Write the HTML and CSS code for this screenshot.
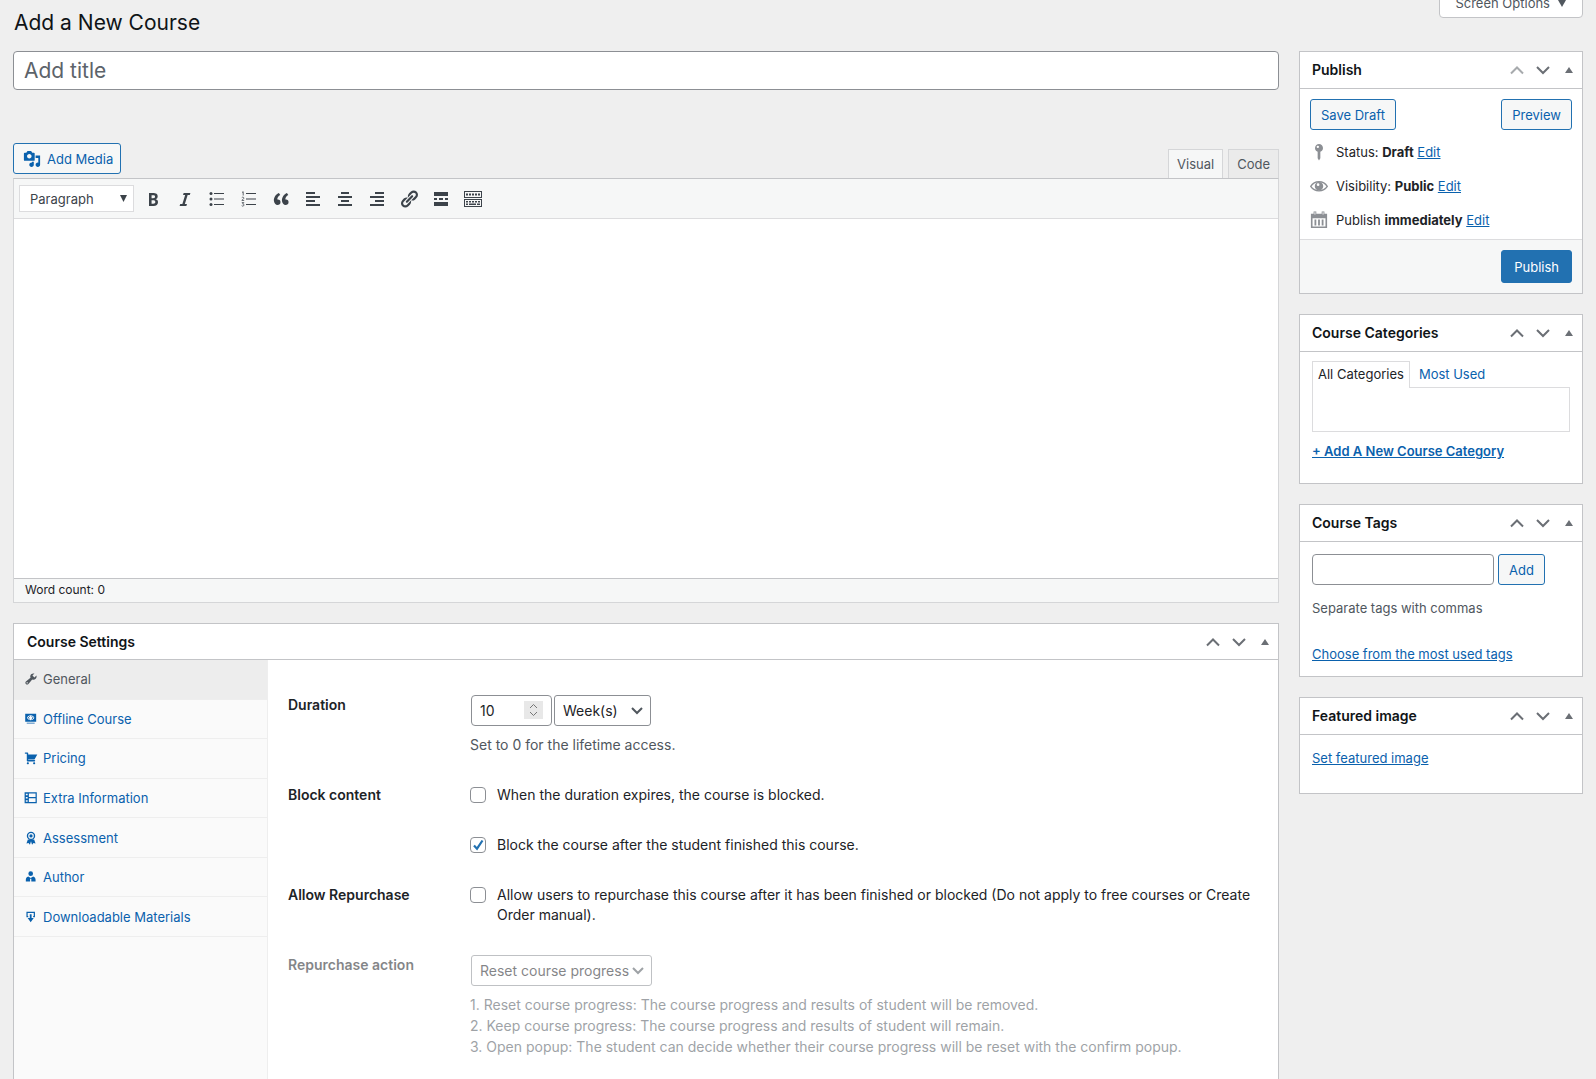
FILE: index.html
```html
<!DOCTYPE html>
<html lang="en">
<head>
<meta charset="utf-8">
<title>Add a New Course</title>
<link rel="stylesheet" href="styles.css">
</head>
<body>
<svg class="sprite" aria-hidden="true">
  <symbol id="i-up" viewBox="0 0 20 20"><path d="M4 13.500 10 7.500l6 6" fill="none" stroke="currentColor" stroke-width="2"/></symbol>
  <symbol id="i-down" viewBox="0 0 20 20"><path d="M4 7l6 6 6-6" fill="none" stroke="currentColor" stroke-width="2"/></symbol>
  <symbol id="i-toggle" viewBox="0 0 20 20"><path d="M6 13h8L10 7z"/></symbol>
</svg>
<div class="page">
  <header class="page-head">
    <h1>Add a New Course</h1>
    <button type="button" class="screen-options">Screen Options <svg class="caret" viewBox="0 0 8 7"><path d="M0 0h8L4 7z"/></svg></button>
  </header>
  <div class="columns">
    <main class="main">
      <input class="title-input" type="text" placeholder="Add title" aria-label="Add title">
      <div class="editor-tools">
        <button type="button" class="btn media-btn"><svg class="icon-18" viewBox="0 0 20 20"><path d="M13 11V4c0-.55-.45-1-1-1h-1.670L9 1H5L3.670 3H2c-.55 0-1 .45-1 1v7c0 .55.45 1 1 1h10c.55 0 1-.45 1-1zM7 4.500c1.380 0 2.500 1.120 2.500 2.500S8.380 9.500 7 9.500 4.500 8.380 4.500 7 5.620 4.500 7 4.500zM14 6h5v10.500c0 1.380-1.120 2.500-2.500 2.500S14 17.880 14 16.500s1.120-2.500 2.500-2.500c.17 0 .34.02.5.05V9h-3V6zm-4 8.050V13h2v3.500c0 1.380-1.120 2.500-2.500 2.500S7 17.880 7 16.500 8.120 14 9.500 14c.17 0 .34.02.5.050z"/></svg>Add Media</button>
        <div class="editor-tabs">
          <button type="button" class="editor-tab is-active">Visual</button>
          <button type="button" class="editor-tab">Code</button>
        </div>
      </div>
      <section class="editor">
        <div class="toolbar">
          <select class="format" aria-label="Format"><option>Paragraph</option></select>
          <button type="button" class="tool" aria-label="Bold"><svg viewBox="0 0 20 20"><path d="M6 4v13h4.540c1.370 0 2.460-.33 3.260-1 .8-.66 1.200-1.580 1.200-2.770 0-.84-.17-1.510-.51-2.010s-.9-.85-1.670-1.030v-.09c.57-.1 1.020-.4 1.360-.9s.51-1.130.51-1.910c0-1.140-.39-1.980-1.170-2.500C12.750 4.260 11.500 4 9.780 4H6zm2.570 5.150V6.260h1.360c.73 0 1.270.11 1.610.32.34.22.51.58.51 1.070 0 .54-.16.92-.47 1.150s-.82.35-1.500.35h-1.510zm0 2.190h1.600c1.440 0 2.160.53 2.160 1.610 0 .6-.17 1.050-.51 1.340s-.86.43-1.570.43H8.570v-3.380z"/></svg></button>
          <button type="button" class="tool" aria-label="Italic"><svg viewBox="0 0 20 20"><path d="M14.780 6h-2.130l-2.800 9h2.120l-.62 2H4.600l.62-2h2.140l2.800-9H8.030l.62-2h6.750z"/></svg></button>
          <button type="button" class="tool" aria-label="Bulleted list"><svg viewBox="0 0 20 20"><circle cx="4" cy="4.500" r="1.500"/><circle cx="4" cy="10" r="1.500"/><circle cx="4" cy="15.500" r="1.500"/><path d="M7 4h10v1H7zM7 9.500h10v1H7zM7 15h10v1H7z"/></svg></button>
          <button type="button" class="tool" aria-label="Numbered list"><svg viewBox="0 0 20 20"><path d="M7 4h10v1H7zM7 9.500h10v1H7zM7 15h10v1H7z"/><path d="M3 3.500l1.200-.8V6.500M2.800 8.600c.8-.8 2.200-.4 2 .6-.1.700-1.100 1.400-2 2.200h2.400M2.800 13.600h2l-1.200 1.300c1.800-.1 1.800 2.200.2 2.200-.5 0-.8-.1-1.100-.4" fill="none" stroke="currentColor" stroke-width=".8"/></svg></button>
          <button type="button" class="tool" aria-label="Blockquote"><svg viewBox="0 0 20 20"><path d="M9.490 13.220c0-.74-.2-1.380-.61-1.900-.62-.78-1.830-.88-2.530-.72-.29-1.650 1.110-3.750 2.920-4.650L7.880 4c-2.730 1.300-5.420 4.280-4.960 8.050C3.210 14.430 4.590 16 6.540 16c.85 0 1.560-.25 2.120-.75s.83-1.180.83-2.030zm8.050 0c0-.74-.2-1.380-.61-1.900-.63-.78-1.830-.88-2.530-.72-.29-1.650 1.110-3.750 2.920-4.650L15.930 4c-2.730 1.300-5.410 4.280-4.950 8.050.29 2.380 1.660 3.950 3.610 3.950.85 0 1.560-.25 2.120-.75s.83-1.180.83-2.030z"/></svg></button>
          <button type="button" class="tool" aria-label="Align left"><svg viewBox="0 0 20 20"><path d="M12 5V3H3v2h9zm5 4V7H3v2h14zm-5 4v-2H3v2h9zm5 4v-2H3v2h14z"/></svg></button>
          <button type="button" class="tool" aria-label="Align center"><svg viewBox="0 0 20 20"><path d="M14 5V3H6v2h8zm3 4V7H3v2h14zm-3 4v-2H6v2h8zm3 4v-2H3v2h14z"/></svg></button>
          <button type="button" class="tool" aria-label="Align right"><svg viewBox="0 0 20 20"><path d="M17 5V3H8v2h9zm0 4V7H3v2h14zm0 4v-2H8v2h9zm0 4v-2H3v2h14z"/></svg></button>
          <button type="button" class="tool" aria-label="Insert link"><svg viewBox="0 0 20 20"><path d="M17.740 2.760c1.680 1.690 1.680 4.410 0 6.100l-1.530 1.520c-1.120 1.120-2.700 1.470-4.140 1.090l2.620-2.610.76-.77.76-.76c.84-.84.84-2.200 0-3.040-.84-.85-2.200-.85-3.040 0l-.77.76-3.380 3.380c-.37-1.440-.02-3.020 1.100-4.140l1.520-1.530c1.690-1.680 4.420-1.680 6.100 0zM8.590 13.430l5.340-5.340c.42-.42.42-1.100 0-1.520-.44-.43-1.130-.39-1.530 0l-5.330 5.340c-.42.42-.42 1.100 0 1.520.44.43 1.130.39 1.520 0zm-.76 2.290l4.140-4.150c.38 1.440.03 3.020-1.090 4.140l-1.520 1.530c-1.690 1.680-4.410 1.680-6.100 0-1.680-1.680-1.680-4.420 0-6.100l1.530-1.520c1.120-1.120 2.700-1.470 4.140-1.100l-4.140 4.150c-.85.84-.85 2.200 0 3.050.84.84 2.200.84 3.040 0z"/></svg></button>
          <button type="button" class="tool" aria-label="Insert Read More tag"><svg viewBox="0 0 20 20"><path d="M17 7V3H3v4h14zM6 11V9H3v2h3zm6 0V9H8v2h4zm5 0V9h-3v2h3zm0 6v-4H3v4h14z"/></svg></button>
          <button type="button" class="tool" aria-label="Toolbar toggle"><svg viewBox="0 0 20 20"><path fill-rule="evenodd" d="M1 2h18v7H1zM2 3v5h16V3zM1 10h18v8H1zM2 11v6h16v-6z"/><path d="M3 4.500h2v2H3zM6 4.500h2v2H6zM9 4.500h2v2H9zM12 4.500h2v2h-2zM15 4.500h2v2h-2zM3 12h2v1.500H3zM6 12h2v1.500H6zM9 12h2v1.500H9zM12 12h2v1.500h-2zM15 12h2v1.500h-2zM3 14.500h2V16H3zM6 14.500h7V16H6zM14 14.500h3V16h-3z"/></svg></button>
        </div>
        <textarea class="editor-body" aria-label="Course content"></textarea>
        <div class="statusbar">Word count: 0</div>
      </section>
      <section class="box settings">
        <div class="box-head">
          <h2>Course Settings</h2>
          <div class="handles">
            <button type="button" aria-label="Move up"><svg><use href="#i-up"/></svg></button>
            <button type="button" aria-label="Move down"><svg><use href="#i-down"/></svg></button>
            <button type="button" aria-label="Toggle panel"><svg><use href="#i-toggle"/></svg></button>
          </div>
        </div>
        <div class="settings-body">
          <nav class="settings-nav">
            <div class="nav-list">
              <a href="#general" class="is-active"><svg viewBox="0 0 20 20"><path d="M16.680 9.770c-1.340 1.340-3.300 1.670-4.950.99l-5.410 6.520c-.99.99-2.590.99-3.580 0s-.99-2.590 0-3.570l6.520-5.420c-.68-1.650-.35-3.610.99-4.950 1.280-1.280 3.120-1.620 4.720-1.060l-2.890 2.890 2.820 2.820 2.860-2.870c.53 1.580.18 3.390-1.080 4.650zM3.810 16.210c.4.39 1.040.39 1.430 0 .4-.4.4-1.040 0-1.430-.39-.4-1.030-.4-1.430 0-.39.39-.39 1.030 0 1.430z"/></svg>General</a>
              <a href="#offline"><svg viewBox="-1 -1 23 23"><path fill-rule="evenodd" d="M1 2h18v13H1zM10 4.500C7 4.500 5 6.500 4 8.500c1 2 3 4 6 4s5-2 6-4c-1-2-3-4-6-4zM3.500 16.500h13V18h-13z"/><path d="M8.500 6 6 8.500 8.500 11M11.500 6 14 8.500 11.500 11" fill="none" stroke="currentColor" stroke-width="1.500"/></svg>Offline Course</a>
              <a href="#pricing"><svg viewBox="0 0 20 20"><path d="M6 13h9c.55 0 1 .45 1 1s-.45 1-1 1H5c-.55 0-1-.45-1-1V4H2c-.55 0-1-.45-1-1s.45-1 1-1h3c.55 0 1 .45 1 1v2h13l-4 7H6v1zm-.5 3c.83 0 1.500.67 1.500 1.500S6.330 19 5.500 19 4 18.330 4 17.500 4.670 16 5.500 16zm9 0c.83 0 1.500.67 1.500 1.500s-.67 1.500-1.500 1.500-1.500-.67-1.500-1.500.67-1.500 1.500-1.500z"/></svg>Pricing</a>
              <a href="#extra"><svg viewBox="-1 -1 23 23"><path fill-rule="evenodd" d="M0 1h20v18H0zM7 3v6h11V3zM7 11v6h11v-6zM2 3.500V6h3V3.500zM2 8.800v2.400h3V8.800zM2 14v2.500h3V14z"/></svg>Extra Information</a>
              <a href="#assessment"><svg viewBox="0 0 20 20"><path d="M5.500 12 3.500 18l3-.8L8.500 19.500l1.500-5 1.500 5 2-2.300 3 .8-2-6z"/><circle cx="10" cy="7" r="5" fill="none" stroke="currentColor" stroke-width="2"/><circle cx="10" cy="7" r="2.300"/></svg>Assessment</a>
              <a href="#author"><svg viewBox="-1 -1 23 23"><circle cx="10" cy="5" r="3.800"/><path d="M6 9.500 10 12l4-2.500c2.800.8 4 3 4 5.500v3h-7v-4.500H9V18H2v-3c0-2.500 1.200-4.700 4-5.500z"/></svg>Author</a>
              <a href="#materials"><svg viewBox="-1 -1 23 23"><path d="M3 2h14v9h-3V9h1V4H5v5h1v2H3zM8.500 6h3v6H15l-5 7-5-7h3.500z"/></svg>Downloadable Materials</a>
            </div>
          </nav>
          <form class="fields">
            <div class="field">
              <label class="field-label" for="duration">Duration</label>
              <div class="field-control">
                <div class="inline">
                  <span class="number"><input id="duration" type="number" value="10"><svg class="spinner" viewBox="0 0 19 18"><path d="M6 7l3.500-3.500L13 7M6 11l3.500 3.500L13 11" fill="none" stroke="currentColor"/></svg></span>
                  <select class="select unit" aria-label="Duration unit"><option>Week(s)</option></select>
                </div>
                <p class="hint">Set to 0 for the lifetime access.</p>
              </div>
            </div>
            <div class="field">
              <span class="field-label">Block content</span>
              <div class="field-control checks">
                <label class="check"><input type="checkbox">When the duration expires, the course is blocked.</label>
                <label class="check"><input type="checkbox" checked>Block the course after the student finished this course.</label>
              </div>
            </div>
            <div class="field">
              <span class="field-label">Allow Repurchase</span>
              <div class="field-control">
                <label class="check"><input type="checkbox"><span>Allow users to repurchase this course after it has been finished or blocked (Do not apply to free courses or Create Order manual).</span></label>
              </div>
            </div>
            <div class="field is-muted">
              <label class="field-label" for="action">Repurchase action</label>
              <div class="field-control">
                <div class="inline"><select class="select action" id="action"><option>Reset course progress</option></select></div>
                <p class="hint">1. Reset course progress: The course progress and results of student will be removed.<br>2. Keep course progress: The course progress and results of student will remain.<br>3. Open popup: The student can decide whether their course progress will be reset with the confirm popup.</p>
              </div>
            </div>
          </form>
        </div>
      </section>
    </main>
    <aside class="side">
      <section class="box">
        <div class="box-head">
          <h2>Publish</h2>
          <div class="handles">
            <button type="button" class="is-first" aria-label="Move up"><svg><use href="#i-up"/></svg></button>
            <button type="button" aria-label="Move down"><svg><use href="#i-down"/></svg></button>
            <button type="button" aria-label="Toggle panel"><svg><use href="#i-toggle"/></svg></button>
          </div>
        </div>
        <div class="publish-actions">
          <button type="button" class="btn">Save Draft</button>
          <button type="button" class="btn">Preview</button>
        </div>
        <ul class="publish-info">
          <li><svg viewBox="0 0 20 20"><path fill-rule="evenodd" d="M10 1a4.500 4.500 0 0 1 1.500 8.700V17L10 19.500 8.500 17V9.700A4.500 4.500 0 0 1 10 1zM8.700 3a1.300 1.300 0 1 0 0 2.600 1.300 1.300 0 0 0 0-2.600z"/></svg><span>Status: <b>Draft</b> <a href="#status">Edit</a></span></li>
          <li><svg viewBox="0 0 20 20"><path d="M.8 10.500C5 3.500 15 3.500 19.200 10.500 15 17 5 17 .8 10.500z" fill="none" stroke="currentColor" stroke-width="1.500"/><path fill-rule="evenodd" d="M10 5.500a4.700 4.700 0 1 1 0 9.400 4.700 4.700 0 0 1 0-9.400zM9 7a1.500 1.500 0 1 0 0 3 1.500 1.500 0 0 0 0-3z"/></svg><span>Visibility: <b>Public</b> <a href="#visibility">Edit</a></span></li>
          <li><svg viewBox="0 0 20 20"><path fill-rule="evenodd" d="M1 3h18v16H1zM2.800 8v9.300h14.400V8z"/><path d="M4 .5h3V5H4zM13 .5h3V5h-3zM5 9.500h2v6.500H5zM9 9.500h2v6.500H9zM13 9.500h2v6.500h-2z"/><path d="M5 1.500h1V4H5zM14 1.500h1V4h-1z" fill="#fff"/></svg><span>Publish <b>immediately</b> <a href="#schedule">Edit</a></span></li>
        </ul>
        <div class="publish-foot"><button type="button" class="btn btn-primary">Publish</button></div>
      </section>
      <section class="box">
        <div class="box-head">
          <h2>Course Categories</h2>
          <div class="handles">
            <button type="button" aria-label="Move up"><svg><use href="#i-up"/></svg></button>
            <button type="button" aria-label="Move down"><svg><use href="#i-down"/></svg></button>
            <button type="button" aria-label="Toggle panel"><svg><use href="#i-toggle"/></svg></button>
          </div>
        </div>
        <div class="categories">
          <div class="cat-tabs"><a href="#all" class="is-active">All Categories</a><a href="#used">Most Used</a></div>
          <div class="cat-panel"></div>
          <a href="#new-category" class="add-link">+ Add A New Course Category</a>
        </div>
      </section>
      <section class="box">
        <div class="box-head">
          <h2>Course Tags</h2>
          <div class="handles">
            <button type="button" aria-label="Move up"><svg><use href="#i-up"/></svg></button>
            <button type="button" aria-label="Move down"><svg><use href="#i-down"/></svg></button>
            <button type="button" aria-label="Toggle panel"><svg><use href="#i-toggle"/></svg></button>
          </div>
        </div>
        <div class="tags">
          <div class="tag-row"><input type="text" aria-label="Add tag"><button type="button" class="btn">Add</button></div>
          <p>Separate tags with commas</p>
          <a href="#tags">Choose from the most used tags</a>
        </div>
      </section>
      <section class="box">
        <div class="box-head">
          <h2>Featured image</h2>
          <div class="handles">
            <button type="button" aria-label="Move up"><svg><use href="#i-up"/></svg></button>
            <button type="button" aria-label="Move down"><svg><use href="#i-down"/></svg></button>
            <button type="button" aria-label="Toggle panel"><svg><use href="#i-toggle"/></svg></button>
          </div>
        </div>
        <div class="featured"><a href="#image">Set featured image</a></div>
      </section>
    </aside>
  </div>
</div>
</body>
</html>
```
FILE: styles.css
```css
* { box-sizing: border-box; }

body {
  margin: 0;
  background: #efefef;
  color: #1d2327;
  font: 13px/20px Inter, "Liberation Sans", sans-serif;
}

button, input, select, textarea { font: inherit; color: inherit; margin: 0; }
button { cursor: pointer; }
h1, h2, p, ul { margin: 0; padding: 0; }
h1, h2 { color: #101417; }
ul { list-style: none; }
a { color: #0a61ad; }
svg { fill: currentColor; flex: none; }
.sprite { display: none; }

.page {
  display: flex;
  flex-direction: column;
  min-height: 100vh;
  padding: 0 13px;
}

.page-head {
  display: flex;
  justify-content: space-between;
  align-items: flex-start;
  height: 51px;
}
.page-head h1 {
  padding: 7px 0 0 1px;
  font-size: 21px;
  line-height: 32px;
  font-weight: 400;
}
.screen-options {
  display: flex;
  align-items: center;
  gap: 8px;
  height: 30px;
  margin-top: -12px;
  padding: 0 16px 0 15px;
  background: #fff;
  border: 1px solid #c3c4c7;
  border-radius: 0 0 4px 4px;
  color: #50575e;
}
.caret { width: 8px; height: 7px; }

.columns { display: flex; flex: 1; gap: 20px; }
.main { display: flex; flex: 1; flex-direction: column; min-width: 0; }
.side { display: flex; flex: none; flex-direction: column; gap: 20px; width: 284px; }

.title-input {
  width: 100%;
  height: 39px;
  padding: 0 10px;
  border: 1px solid #8c8f94;
  border-radius: 4px;
  background: #fff;
  font-size: 21px;
}
.title-input::placeholder { color: #5c636a; opacity: 1; }

.btn {
  height: 31px;
  padding: 0 10px;
  border: 1px solid #2271b1;
  border-radius: 3px;
  background: #f6f7f7;
  color: #0a61ad;
}
.btn-primary { height: 33px; padding: 0 12px; background: #2271b1; color: #fff; }

.editor-tools { display: flex; justify-content: space-between; margin-top: 53px; height: 35px; }
.media-btn { display: flex; align-items: center; gap: 6px; padding: 0 7px 0 9px; }
.icon-18 { width: 18px; height: 18px; }
.editor-tabs { display: flex; align-items: flex-end; gap: 5px; margin-bottom: -1px; }
.editor-tab {
  height: 30px;
  padding: 0 8px;
  border: 1px solid #d5d6d8;
  border-bottom-color: #c3c4c7;
  background: #ebebeb;
  color: #50575e;
}
.editor-tab.is-active { background: #f6f7f7; border-bottom-color: #f6f7f7; }

.editor { border: 1px solid #d5d6d8; border-top-color: #c3c4c7; background: #fff; }
.toolbar {
  display: flex;
  align-items: center;
  gap: 12px;
  height: 40px;
  padding: 0 5px;
  background: #f6f7f7;
  border-bottom: 1px solid #dcdcde;
  color: #3c434a;
}
.format {
  appearance: none;
  width: 115px;
  height: 27px;
  margin-right: -3px;
  padding: 0 10px;
  border: 1px solid #dcdcde;
  background: #fff url("data:image/svg+xml,%3Csvg xmlns='http://www.w3.org/2000/svg' viewBox='0 0 7 7'%3E%3Cpath fill='%233c434a' d='M0 0h7L3.500 7z'/%3E%3C/svg%3E") no-repeat right 6px center / 7px 7px;
}
.tool {
  display: flex;
  width: 20px;
  height: 20px;
  padding: 0;
  border: 0;
  background: none;
}
.tool svg { width: 20px; height: 20px; }
.editor-body {
  display: block;
  width: 100%;
  height: 359px;
  padding: 10px;
  border: 0;
  background: #fff;
  resize: none;
}
.statusbar {
  height: 24px;
  padding: 0 11px;
  border-top: 1px solid #c3c4c7;
  background: #f6f7f7;
  font-size: 12px;
  line-height: 22px;
}

.box { border: 1px solid #c3c4c7; background: #fff; }
.box-head {
  display: flex;
  align-items: center;
  justify-content: space-between;
  height: 37px;
  padding: 0 3px 0 12px;
  border-bottom: 1px solid #c3c4c7;
}
.box-head h2 { font-size: 14px; line-height: 20px; font-weight: 600; }
.handles { display: flex; gap: 6px; color: #6b6f75; }
.handles button { display: flex; padding: 0; border: 0; background: none; }
.handles svg { width: 20px; height: 20px; }
.handles .is-first { color: #a7aaad; }

.settings { display: flex; flex: 1; flex-direction: column; margin-top: 20px; border-bottom: 0; }
.settings .box-head { height: 36px; padding-left: 13px; }
.settings-body { display: flex; flex: 1; }
.settings-nav { flex: none; width: 254px; background: #fafafa; border-right: 1px solid #eee; }
.nav-list { display: grid; grid-auto-rows: 1fr; height: 277px; }
.settings-nav a {
  display: flex;
  align-items: center;
  gap: 5px;
  padding: 0 10px;
  border-bottom: 1px solid #eee;
  text-decoration: none;
}
.settings-nav .is-active { background: #ededed; color: #50575e; }
.settings-nav svg { width: 14px; height: 14px; }

.fields {
  display: flex;
  flex: 1;
  flex-direction: column;
  gap: 30px;
  padding: 35px 20px 20px;
  font-size: 14px;
}
.field { display: flex; }
.field-label { flex: none; width: 182px; font-weight: 600; line-height: 20px; }
.field-control { flex: 1; }
.inline { display: flex; gap: 2px; padding-left: 1px; }
.number { position: relative; display: flex; }
.number input {
  appearance: textfield;
  width: 81px;
  height: 31px;
  padding: 0 8px;
  border: 1px solid #8c8f94;
  border-radius: 4px;
  background: #fff;
}
.number input::-webkit-inner-spin-button { display: none; }
.spinner {
  position: absolute;
  top: 6px;
  right: 9px;
  width: 19px;
  height: 18px;
  background: #e8e8e8;
  color: #777;
  pointer-events: none;
}
.select {
  appearance: none;
  height: 31px;
  padding: 0 8px;
  border: 1px solid #8c8f94;
  border-radius: 3px;
  background: #fff url("data:image/svg+xml,%3Csvg xmlns='http://www.w3.org/2000/svg' viewBox='0 0 12 8'%3E%3Cpath fill='none' stroke='%2350575e' stroke-width='2' d='M1 1l5 5 5-5'/%3E%3C/svg%3E") no-repeat right 7px center / 12px 8px;
}
.unit { width: 97px; }
.action { width: 181px; }
.hint { margin-top: 8px; line-height: 21px; color: #50575e; }
.checks { display: flex; flex-direction: column; gap: 30px; }
.check { display: flex; gap: 11px; }
.check input {
  appearance: none;
  flex: none;
  width: 16px;
  height: 16px;
  margin-top: 2px;
  border: 1px solid #8c8f94;
  border-radius: 4px;
  background: #fff;
}
.check input:checked {
  background: #fff url("data:image/svg+xml,%3Csvg xmlns='http://www.w3.org/2000/svg' viewBox='0 0 14 14'%3E%3Cpath fill='none' stroke='%232271b1' stroke-width='2.200' d='M3 7.500l3 3.200L11.500 2.500'/%3E%3C/svg%3E") center / 14px 14px;
}
.is-muted { opacity: .55; }

.publish-actions { display: flex; justify-content: space-between; padding: 10px 10px 0; }
.publish-info { padding: 5px 10px 2px; }
.publish-info li { display: flex; align-items: center; gap: 8px; height: 34px; }
.publish-info svg { width: 18px; height: 18px; color: #8c8f94; }
.publish-foot {
  display: flex;
  justify-content: flex-end;
  padding: 10px;
  border-top: 1px solid #dcdcde;
  background: #f6f7f7;
}

.categories { padding: 9px 12px 22px; }
.cat-tabs { display: flex; }
.cat-tabs a { padding: 3px 9px; text-decoration: none; }
.cat-tabs .is-active {
  margin-bottom: -1px;
  padding: 2px 5px 4px;
  border: 1px solid #dcdcde;
  border-bottom: 0;
  background: #fff;
  color: #1d2327;
}
.cat-panel { height: 45px; border: 1px solid #dcdcde; }
.add-link { display: block; margin-top: 9px; font-weight: 600; }

.tags { padding: 12px; }
.tag-row { display: flex; gap: 4px; }
.tag-row input {
  width: 182px;
  height: 31px;
  padding: 0 8px;
  border: 1px solid #8c8f94;
  border-radius: 4px;
  background: #fff;
}
.tags p { margin: 13px 0 26px; color: #50575e; }
.featured { padding: 13px 12px 25px; }
```
